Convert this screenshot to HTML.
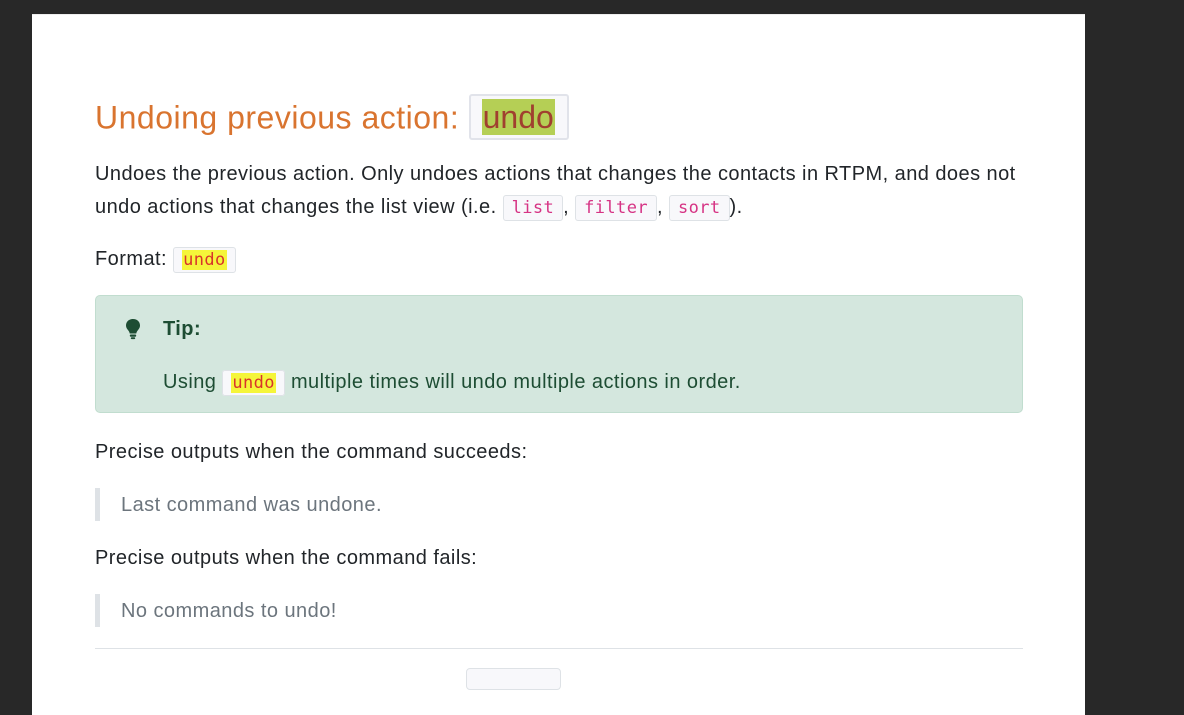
<!DOCTYPE html>
<html><head><meta charset="utf-8"><style>
html,body{margin:0;padding:0;width:1184px;height:678px;overflow:hidden;background:#282828;}
body{font-family:"Liberation Sans",sans-serif;color:#212529;}
.page{position:absolute;left:32px;top:14px;width:1053px;height:700px;background:#fff;border-top:1px solid #eee;}
.t{position:absolute;white-space:nowrap;font-size:20px;line-height:24px;letter-spacing:0.45px;}
code{font-family:"DejaVu Sans Mono","Liberation Mono",monospace;font-size:17px;letter-spacing:0.4px;border:1px solid #dee2e6;border-radius:3px;background:#f8f8fb;padding:2px 8px;}
.pk{color:#d63384;}
.hl{background:#f5f53a;color:#d8342a;padding:0 1px;}
.tip{position:absolute;left:95px;top:295px;width:926px;height:116px;background:#d4e7de;border:1px solid #c1ddcf;border-radius:5px;}
.bq{position:absolute;left:95px;width:5px;height:33px;background:#dee2e6;}
</style></head><body>
<div class="page"></div>
<div class="t" style="left:95px;top:97px;font-size:32px;line-height:40px;color:#d9742f;letter-spacing:0.5px">Undoing previous action: <span style="display:inline-block;border:2px solid #e1e3ea;border-radius:3px;background:#f8f8fb;padding:0 12px 0 11px;height:42px;vertical-align:middle;line-height:42px;position:relative;top:-3px;letter-spacing:0"><span style="background:#b5cf55;color:#a0402f;font-family:'Liberation Sans',sans-serif;padding:0 1px;">undo</span></span></div>
<div class="t" style="left:95px;top:162px;">Undoes the previous action. Only undoes actions that changes the contacts in RTPM, and does not</div>
<div class="t" style="left:95px;top:195px;">undo actions that changes the list view (i.e. <code class="pk">list</code>, <code class="pk">filter</code>, <code class="pk">sort</code>).</div>
<div class="t" style="left:95px;top:247px;">Format: <code><span class="hl">undo</span></code></div>
<div class="tip"></div>
<svg style="position:absolute;left:124px;top:318px" width="18" height="22" viewBox="0 0 18 22"><path d="M9 1C4.6 1 2 4 2 7.5c0 2.6 1.6 4 2.7 5.5.7 1 .9 1.8 1 2.5h6.6c.1-.7.3-1.5 1-2.5C14.4 11.5 16 10.1 16 7.5 16 4 13.4 1 9 1z" fill="#1d4d33"/><rect x="5.8" y="16.5" width="6.4" height="2.2" rx="1" fill="#1d4d33"/><rect x="6.8" y="19.3" width="4.4" height="1.8" rx=".9" fill="#1d4d33"/></svg>
<div class="t" style="left:163px;top:317px;color:#1d4d33;font-weight:bold;">Tip:</div>
<div class="t" style="left:163px;top:370px;color:#1d4d33;">Using <code><span class="hl">undo</span></code> multiple times will undo multiple actions in order.</div>
<div class="t" style="left:95px;top:440px;">Precise outputs when the command succeeds:</div>
<div class="bq" style="top:488px"></div>
<div class="t" style="left:121px;top:493px;color:#6c757d;">Last command was undone.</div>
<div class="t" style="left:95px;top:546px;">Precise outputs when the command fails:</div>
<div class="bq" style="top:594px"></div>
<div class="t" style="left:121px;top:599px;color:#6c757d;">No commands to undo!</div>
<div style="position:absolute;left:95px;top:648px;width:928px;height:1px;background:#dee2e6"></div>
<div style="position:absolute;left:466px;top:668px;width:93px;height:20px;border:1px solid #dee2e6;border-radius:4px;background:#f8f8fb"></div>
</body></html>
